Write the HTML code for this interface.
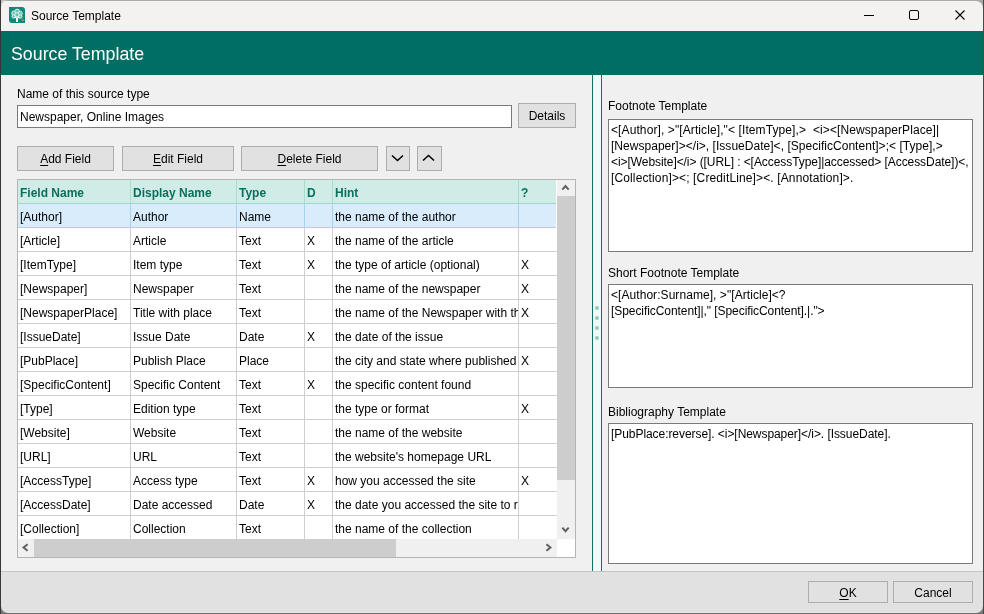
<!DOCTYPE html>
<html><head><meta charset="utf-8">
<style>
*{margin:0;padding:0;box-sizing:border-box}
html,body{width:984px;height:614px;overflow:hidden;background:#f0f0f0}
body{font-family:"Liberation Sans",sans-serif;font-size:12px;color:#000;position:relative}
.a{position:absolute}
.t{position:absolute;white-space:pre;line-height:16px;height:16px}
.btn{position:absolute;background:#e1e1e1;border:1px solid #adadad}
.btn span{position:absolute;left:0;right:0;text-align:center;line-height:16px;white-space:pre}
u{text-decoration:underline;text-decoration-thickness:1px;text-underline-offset:2px}
.ta{position:absolute;background:#fff;border:1px solid #7a7a7a}
.hd{color:#08705c;font-weight:bold}
.t,.btn span{will-change:transform}</style></head><body>
<!-- window frame -->
<div class="a" style="left:0;top:0;width:984px;height:614px;background:#f0f0f0"></div>
<!-- title bar -->
<div class="a" style="left:1px;top:1px;width:982px;height:30px;background:#f3f2f0"></div>
<div class="a" style="left:0;top:0;width:984px;height:1px;background:#aaa"></div>
<svg class="a" style="left:9px;top:7px" width="16" height="16" viewBox="0 0 16 16"><path d="M0 0H13A3 3 0 0 1 16 3V16H3A3 3 0 0 1 0 13Z" fill="#10887a"/><g fill="#6cc2b2" stroke="#e6f6f2" stroke-width="0.9"><circle cx="5" cy="6.2" r="2.3"/><circle cx="8.2" cy="4.4" r="2.3"/><circle cx="11.2" cy="6.4" r="2.1"/><circle cx="4.6" cy="9.4" r="1.7"/><circle cx="11.4" cy="9.6" r="1.7"/><circle cx="8" cy="7.8" r="2.1"/></g><path d="M6 10L8 11.5L10 10" stroke="#fff" stroke-width="1.2" fill="none"/><rect x="7.1" y="10.8" width="1.8" height="4.2" fill="#fff"/><rect x="13" y="12.5" width="1.6" height="1.6" fill="#c9a23a"/></svg>
<div class="t" style="left:31px;top:8px">Source Template</div>
<div class="a" style="left:864px;top:15px;width:10px;height:1px;background:#000"></div>
<div class="a" style="left:909px;top:10px;width:10px;height:10px;border:1px solid #000;border-radius:2px"></div>
<svg class="a" style="left:955px;top:10px" width="10" height="10" viewBox="0 0 10 10"><path d="M0.5 0.5L9.5 9.5M9.5 0.5L0.5 9.5" stroke="#000" stroke-width="1.1"/></svg>

<!-- teal header -->
<div class="a" style="left:1px;top:31px;width:982px;height:44px;background:#006e62"></div>
<div class="t" style="left:11px;top:42px;font-size:17.8px;line-height:24px;height:24px;color:#fff">Source Template</div>

<!-- left panel -->
<div class="t" style="left:17px;top:86px">Name of this source type</div>
<div class="ta" style="left:17px;top:105px;width:495px;height:23px"></div>
<div class="t" style="left:20px;top:109px">Newspaper, Online Images</div>
<div class="btn" style="left:518px;top:103px;width:58px;height:25px"><span style="top:4px">Details</span></div>

<div class="btn" style="left:17px;top:146px;width:97px;height:25px"><span style="top:4px"><u>A</u>dd Field</span></div>
<div class="btn" style="left:122px;top:146px;width:112px;height:25px"><span style="top:4px"><u>E</u>dit Field</span></div>
<div class="btn" style="left:241px;top:146px;width:137px;height:25px"><span style="top:4px"><u>D</u>elete Field</span></div>
<div class="btn" style="left:386px;top:146px;width:24px;height:25px"></div>
<svg class="a" style="left:391px;top:154px" width="13" height="8" viewBox="0 0 13 8"><path d="M1 1.5L6.5 6.5L12 1.5" stroke="#000" stroke-width="1.6" fill="none"/></svg>
<div class="btn" style="left:417px;top:146px;width:25px;height:25px"></div>
<svg class="a" style="left:422px;top:154px" width="13" height="8" viewBox="0 0 13 8"><path d="M1 6.5L6.5 1.5L12 6.5" stroke="#000" stroke-width="1.6" fill="none"/></svg>

<!-- grid -->
<div id="grid" class="a" style="left:17px;top:179px;width:559px;height:379px;border:1px solid #b4b4b4;background:#fff;overflow:hidden"></div>
<div id="rows"><div class="a" style="left:18px;top:180px;width:538px;height:23px;background:#d0ece6"></div>
<div class="a" style="left:18px;top:203px;width:538px;height:1px;background:#9fd9c6"></div>
<div class="a" style="left:130px;top:180px;width:1px;height:23px;background:#a9dccb"></div>
<div class="a" style="left:236px;top:180px;width:1px;height:23px;background:#a9dccb"></div>
<div class="a" style="left:304px;top:180px;width:1px;height:23px;background:#a9dccb"></div>
<div class="a" style="left:332px;top:180px;width:1px;height:23px;background:#a9dccb"></div>
<div class="a" style="left:518px;top:180px;width:1px;height:23px;background:#a9dccb"></div>
<div class="t hd" style="left:20px;top:185px">Field Name</div>
<div class="t hd" style="left:133px;top:185px">Display Name</div>
<div class="t hd" style="left:239px;top:185px">Type</div>
<div class="t hd" style="left:307px;top:185px">D</div>
<div class="t hd" style="left:335px;top:185px">Hint</div>
<div class="t hd" style="left:521px;top:185px">?</div>
<div class="a" style="left:18px;top:204px;width:538px;height:23px;background:#d8ecfc"></div>
<div class="a" style="left:18px;top:227px;width:538px;height:1px;background:#a7d3f3"></div>
<div class="a" style="left:130px;top:204px;width:1px;height:23px;background:#a7d3f3"></div>
<div class="a" style="left:236px;top:204px;width:1px;height:23px;background:#a7d3f3"></div>
<div class="a" style="left:304px;top:204px;width:1px;height:23px;background:#a7d3f3"></div>
<div class="a" style="left:332px;top:204px;width:1px;height:23px;background:#a7d3f3"></div>
<div class="a" style="left:518px;top:204px;width:1px;height:23px;background:#a7d3f3"></div>
<div class="t" style="left:20px;top:209px;width:110px;overflow:hidden">[Author]</div>
<div class="t" style="left:133px;top:209px;width:103px;overflow:hidden">Author</div>
<div class="t" style="left:239px;top:209px;width:65px;overflow:hidden">Name</div>
<div class="t" style="left:335px;top:209px;width:183px;overflow:hidden">the name of the author</div>
<div class="a" style="left:18px;top:251px;width:539px;height:1px;background:#cfcfcf"></div>
<div class="a" style="left:130px;top:228px;width:1px;height:24px;background:#cfcfcf"></div>
<div class="a" style="left:236px;top:228px;width:1px;height:24px;background:#cfcfcf"></div>
<div class="a" style="left:304px;top:228px;width:1px;height:24px;background:#cfcfcf"></div>
<div class="a" style="left:332px;top:228px;width:1px;height:24px;background:#cfcfcf"></div>
<div class="a" style="left:518px;top:228px;width:1px;height:24px;background:#cfcfcf"></div>
<div class="t" style="left:20px;top:233px;width:110px;overflow:hidden">[Article]</div>
<div class="t" style="left:133px;top:233px;width:103px;overflow:hidden">Article</div>
<div class="t" style="left:239px;top:233px;width:65px;overflow:hidden">Text</div>
<div class="t" style="left:307px;top:233px;width:25px;overflow:hidden">X</div>
<div class="t" style="left:335px;top:233px;width:183px;overflow:hidden">the name of the article</div>
<div class="a" style="left:18px;top:275px;width:539px;height:1px;background:#cfcfcf"></div>
<div class="a" style="left:130px;top:252px;width:1px;height:24px;background:#cfcfcf"></div>
<div class="a" style="left:236px;top:252px;width:1px;height:24px;background:#cfcfcf"></div>
<div class="a" style="left:304px;top:252px;width:1px;height:24px;background:#cfcfcf"></div>
<div class="a" style="left:332px;top:252px;width:1px;height:24px;background:#cfcfcf"></div>
<div class="a" style="left:518px;top:252px;width:1px;height:24px;background:#cfcfcf"></div>
<div class="t" style="left:20px;top:257px;width:110px;overflow:hidden">[ItemType]</div>
<div class="t" style="left:133px;top:257px;width:103px;overflow:hidden">Item type</div>
<div class="t" style="left:239px;top:257px;width:65px;overflow:hidden">Text</div>
<div class="t" style="left:307px;top:257px;width:25px;overflow:hidden">X</div>
<div class="t" style="left:335px;top:257px;width:183px;overflow:hidden">the type of article (optional)</div>
<div class="t" style="left:521px;top:257px;width:35px;overflow:hidden">X</div>
<div class="a" style="left:18px;top:299px;width:539px;height:1px;background:#cfcfcf"></div>
<div class="a" style="left:130px;top:276px;width:1px;height:24px;background:#cfcfcf"></div>
<div class="a" style="left:236px;top:276px;width:1px;height:24px;background:#cfcfcf"></div>
<div class="a" style="left:304px;top:276px;width:1px;height:24px;background:#cfcfcf"></div>
<div class="a" style="left:332px;top:276px;width:1px;height:24px;background:#cfcfcf"></div>
<div class="a" style="left:518px;top:276px;width:1px;height:24px;background:#cfcfcf"></div>
<div class="t" style="left:20px;top:281px;width:110px;overflow:hidden">[Newspaper]</div>
<div class="t" style="left:133px;top:281px;width:103px;overflow:hidden">Newspaper</div>
<div class="t" style="left:239px;top:281px;width:65px;overflow:hidden">Text</div>
<div class="t" style="left:335px;top:281px;width:183px;overflow:hidden">the name of the newspaper</div>
<div class="t" style="left:521px;top:281px;width:35px;overflow:hidden">X</div>
<div class="a" style="left:18px;top:323px;width:539px;height:1px;background:#cfcfcf"></div>
<div class="a" style="left:130px;top:300px;width:1px;height:24px;background:#cfcfcf"></div>
<div class="a" style="left:236px;top:300px;width:1px;height:24px;background:#cfcfcf"></div>
<div class="a" style="left:304px;top:300px;width:1px;height:24px;background:#cfcfcf"></div>
<div class="a" style="left:332px;top:300px;width:1px;height:24px;background:#cfcfcf"></div>
<div class="a" style="left:518px;top:300px;width:1px;height:24px;background:#cfcfcf"></div>
<div class="t" style="left:20px;top:305px;width:110px;overflow:hidden">[NewspaperPlace]</div>
<div class="t" style="left:133px;top:305px;width:103px;overflow:hidden">Title with place</div>
<div class="t" style="left:239px;top:305px;width:65px;overflow:hidden">Text</div>
<div class="t" style="left:335px;top:305px;width:183px;overflow:hidden">the name of the Newspaper with the place</div>
<div class="t" style="left:521px;top:305px;width:35px;overflow:hidden">X</div>
<div class="a" style="left:18px;top:347px;width:539px;height:1px;background:#cfcfcf"></div>
<div class="a" style="left:130px;top:324px;width:1px;height:24px;background:#cfcfcf"></div>
<div class="a" style="left:236px;top:324px;width:1px;height:24px;background:#cfcfcf"></div>
<div class="a" style="left:304px;top:324px;width:1px;height:24px;background:#cfcfcf"></div>
<div class="a" style="left:332px;top:324px;width:1px;height:24px;background:#cfcfcf"></div>
<div class="a" style="left:518px;top:324px;width:1px;height:24px;background:#cfcfcf"></div>
<div class="t" style="left:20px;top:329px;width:110px;overflow:hidden">[IssueDate]</div>
<div class="t" style="left:133px;top:329px;width:103px;overflow:hidden">Issue Date</div>
<div class="t" style="left:239px;top:329px;width:65px;overflow:hidden">Date</div>
<div class="t" style="left:307px;top:329px;width:25px;overflow:hidden">X</div>
<div class="t" style="left:335px;top:329px;width:183px;overflow:hidden">the date of the issue</div>
<div class="a" style="left:18px;top:371px;width:539px;height:1px;background:#cfcfcf"></div>
<div class="a" style="left:130px;top:348px;width:1px;height:24px;background:#cfcfcf"></div>
<div class="a" style="left:236px;top:348px;width:1px;height:24px;background:#cfcfcf"></div>
<div class="a" style="left:304px;top:348px;width:1px;height:24px;background:#cfcfcf"></div>
<div class="a" style="left:332px;top:348px;width:1px;height:24px;background:#cfcfcf"></div>
<div class="a" style="left:518px;top:348px;width:1px;height:24px;background:#cfcfcf"></div>
<div class="t" style="left:20px;top:353px;width:110px;overflow:hidden">[PubPlace]</div>
<div class="t" style="left:133px;top:353px;width:103px;overflow:hidden">Publish Place</div>
<div class="t" style="left:239px;top:353px;width:65px;overflow:hidden">Place</div>
<div class="t" style="left:335px;top:353px;width:183px;overflow:hidden">the city and state where published</div>
<div class="t" style="left:521px;top:353px;width:35px;overflow:hidden">X</div>
<div class="a" style="left:18px;top:395px;width:539px;height:1px;background:#cfcfcf"></div>
<div class="a" style="left:130px;top:372px;width:1px;height:24px;background:#cfcfcf"></div>
<div class="a" style="left:236px;top:372px;width:1px;height:24px;background:#cfcfcf"></div>
<div class="a" style="left:304px;top:372px;width:1px;height:24px;background:#cfcfcf"></div>
<div class="a" style="left:332px;top:372px;width:1px;height:24px;background:#cfcfcf"></div>
<div class="a" style="left:518px;top:372px;width:1px;height:24px;background:#cfcfcf"></div>
<div class="t" style="left:20px;top:377px;width:110px;overflow:hidden">[SpecificContent]</div>
<div class="t" style="left:133px;top:377px;width:103px;overflow:hidden">Specific Content</div>
<div class="t" style="left:239px;top:377px;width:65px;overflow:hidden">Text</div>
<div class="t" style="left:307px;top:377px;width:25px;overflow:hidden">X</div>
<div class="t" style="left:335px;top:377px;width:183px;overflow:hidden">the specific content found</div>
<div class="a" style="left:18px;top:419px;width:539px;height:1px;background:#cfcfcf"></div>
<div class="a" style="left:130px;top:396px;width:1px;height:24px;background:#cfcfcf"></div>
<div class="a" style="left:236px;top:396px;width:1px;height:24px;background:#cfcfcf"></div>
<div class="a" style="left:304px;top:396px;width:1px;height:24px;background:#cfcfcf"></div>
<div class="a" style="left:332px;top:396px;width:1px;height:24px;background:#cfcfcf"></div>
<div class="a" style="left:518px;top:396px;width:1px;height:24px;background:#cfcfcf"></div>
<div class="t" style="left:20px;top:401px;width:110px;overflow:hidden">[Type]</div>
<div class="t" style="left:133px;top:401px;width:103px;overflow:hidden">Edition type</div>
<div class="t" style="left:239px;top:401px;width:65px;overflow:hidden">Text</div>
<div class="t" style="left:335px;top:401px;width:183px;overflow:hidden">the type or format</div>
<div class="t" style="left:521px;top:401px;width:35px;overflow:hidden">X</div>
<div class="a" style="left:18px;top:443px;width:539px;height:1px;background:#cfcfcf"></div>
<div class="a" style="left:130px;top:420px;width:1px;height:24px;background:#cfcfcf"></div>
<div class="a" style="left:236px;top:420px;width:1px;height:24px;background:#cfcfcf"></div>
<div class="a" style="left:304px;top:420px;width:1px;height:24px;background:#cfcfcf"></div>
<div class="a" style="left:332px;top:420px;width:1px;height:24px;background:#cfcfcf"></div>
<div class="a" style="left:518px;top:420px;width:1px;height:24px;background:#cfcfcf"></div>
<div class="t" style="left:20px;top:425px;width:110px;overflow:hidden">[Website]</div>
<div class="t" style="left:133px;top:425px;width:103px;overflow:hidden">Website</div>
<div class="t" style="left:239px;top:425px;width:65px;overflow:hidden">Text</div>
<div class="t" style="left:335px;top:425px;width:183px;overflow:hidden">the name of the website</div>
<div class="a" style="left:18px;top:467px;width:539px;height:1px;background:#cfcfcf"></div>
<div class="a" style="left:130px;top:444px;width:1px;height:24px;background:#cfcfcf"></div>
<div class="a" style="left:236px;top:444px;width:1px;height:24px;background:#cfcfcf"></div>
<div class="a" style="left:304px;top:444px;width:1px;height:24px;background:#cfcfcf"></div>
<div class="a" style="left:332px;top:444px;width:1px;height:24px;background:#cfcfcf"></div>
<div class="a" style="left:518px;top:444px;width:1px;height:24px;background:#cfcfcf"></div>
<div class="t" style="left:20px;top:449px;width:110px;overflow:hidden">[URL]</div>
<div class="t" style="left:133px;top:449px;width:103px;overflow:hidden">URL</div>
<div class="t" style="left:239px;top:449px;width:65px;overflow:hidden">Text</div>
<div class="t" style="left:335px;top:449px;width:183px;overflow:hidden">the website's homepage URL</div>
<div class="a" style="left:18px;top:491px;width:539px;height:1px;background:#cfcfcf"></div>
<div class="a" style="left:130px;top:468px;width:1px;height:24px;background:#cfcfcf"></div>
<div class="a" style="left:236px;top:468px;width:1px;height:24px;background:#cfcfcf"></div>
<div class="a" style="left:304px;top:468px;width:1px;height:24px;background:#cfcfcf"></div>
<div class="a" style="left:332px;top:468px;width:1px;height:24px;background:#cfcfcf"></div>
<div class="a" style="left:518px;top:468px;width:1px;height:24px;background:#cfcfcf"></div>
<div class="t" style="left:20px;top:473px;width:110px;overflow:hidden">[AccessType]</div>
<div class="t" style="left:133px;top:473px;width:103px;overflow:hidden">Access type</div>
<div class="t" style="left:239px;top:473px;width:65px;overflow:hidden">Text</div>
<div class="t" style="left:307px;top:473px;width:25px;overflow:hidden">X</div>
<div class="t" style="left:335px;top:473px;width:183px;overflow:hidden">how you accessed the site</div>
<div class="t" style="left:521px;top:473px;width:35px;overflow:hidden">X</div>
<div class="a" style="left:18px;top:515px;width:539px;height:1px;background:#cfcfcf"></div>
<div class="a" style="left:130px;top:492px;width:1px;height:24px;background:#cfcfcf"></div>
<div class="a" style="left:236px;top:492px;width:1px;height:24px;background:#cfcfcf"></div>
<div class="a" style="left:304px;top:492px;width:1px;height:24px;background:#cfcfcf"></div>
<div class="a" style="left:332px;top:492px;width:1px;height:24px;background:#cfcfcf"></div>
<div class="a" style="left:518px;top:492px;width:1px;height:24px;background:#cfcfcf"></div>
<div class="t" style="left:20px;top:497px;width:110px;overflow:hidden">[AccessDate]</div>
<div class="t" style="left:133px;top:497px;width:103px;overflow:hidden">Date accessed</div>
<div class="t" style="left:239px;top:497px;width:65px;overflow:hidden">Date</div>
<div class="t" style="left:307px;top:497px;width:25px;overflow:hidden">X</div>
<div class="t" style="left:335px;top:497px;width:183px;overflow:hidden">the date you accessed the site to record</div>
<div class="a" style="left:130px;top:516px;width:1px;height:23px;background:#cfcfcf"></div>
<div class="a" style="left:236px;top:516px;width:1px;height:23px;background:#cfcfcf"></div>
<div class="a" style="left:304px;top:516px;width:1px;height:23px;background:#cfcfcf"></div>
<div class="a" style="left:332px;top:516px;width:1px;height:23px;background:#cfcfcf"></div>
<div class="a" style="left:518px;top:516px;width:1px;height:23px;background:#cfcfcf"></div>
<div class="t" style="left:20px;top:521px;width:110px;overflow:hidden">[Collection]</div>
<div class="t" style="left:133px;top:521px;width:103px;overflow:hidden">Collection</div>
<div class="t" style="left:239px;top:521px;width:65px;overflow:hidden">Text</div>
<div class="t" style="left:335px;top:521px;width:183px;overflow:hidden">the name of the collection</div>
<div class="a" style="left:557px;top:180px;width:18px;height:359px;background:#f0f0f0"></div>
<div class="a" style="left:557px;top:196px;width:18px;height:284px;background:#cdcdcd"></div>
<div class="a" style="left:18px;top:539px;width:539px;height:18px;background:#f0f0f0"></div>
<div class="a" style="left:34px;top:539px;width:362px;height:18px;background:#cdcdcd"></div>
<svg class="a" style="left:0;top:0" width="984" height="614"><g stroke="#606060" stroke-width="2" fill="none" stroke-linejoin="miter"><path d="M562.3 189.6L565.5 186L568.7 189.6"/><path d="M562.3 527.6L565.5 531.2L568.7 527.6"/><path d="M27.6 544.3L23.6 547.5L27.6 550.7"/><path d="M546.4 544.3L550.4 547.5L546.4 550.7"/></g></svg>
<div class="a" style="left:557px;top:539px;width:18px;height:18px;background:#fff"></div></div><!--/rows-->

<!-- splitter -->
<div class="a" style="left:592px;top:75px;width:10px;height:496px;background:#f0f9f7;border-left:1px solid #0f7264;border-right:1px solid #0f7264"></div><div class="a" style="left:595px;top:306px;width:4px;height:4px;border-radius:2px;background:#8fcabd"></div><div class="a" style="left:595px;top:316px;width:4px;height:4px;border-radius:2px;background:#8fcabd"></div><div class="a" style="left:595px;top:326px;width:4px;height:4px;border-radius:2px;background:#8fcabd"></div><div class="a" style="left:595px;top:336px;width:4px;height:4px;border-radius:2px;background:#8fcabd"></div>

<!-- right panel -->
<div class="t" style="left:608px;top:98px">Footnote Template</div>
<div class="ta" style="left:608px;top:119px;width:365px;height:133px"></div>
<div class="t" style="left:611px;top:122px;letter-spacing:0.1px">&lt;[Author], &gt;"[Article],"&lt; [ItemType],&gt;  &lt;i&gt;&lt;[NewspaperPlace]|</div>
<div class="t" style="left:611px;top:138px;letter-spacing:0.03px">[Newspaper]&gt;&lt;/i&gt;, [IssueDate]&lt;, [SpecificContent]&gt;;&lt; [Type],&gt;</div>
<div class="t" style="left:611px;top:154px;letter-spacing:-0.07px">&lt;i&gt;[Website]&lt;/i&gt; ([URL] : &lt;[AccessType]|accessed&gt; [AccessDate])&lt;,</div>
<div class="t" style="left:611px;top:170px;letter-spacing:0.13px">[Collection]&gt;&lt;; [CreditLine]&gt;&lt;. [Annotation]&gt;.</div>

<div class="t" style="left:608px;top:265px">Short Footnote Template</div>
<div class="ta" style="left:608px;top:284px;width:365px;height:104px"></div>
<div class="t" style="left:611px;top:287px;letter-spacing:0.06px">&lt;[Author:Surname], &gt;"[Article]&lt;?</div>
<div class="t" style="left:611px;top:303px;letter-spacing:-0.07px">[SpecificContent]|," [SpecificContent].|."&gt;</div>

<div class="t" style="left:608px;top:404px">Bibliography Template</div>
<div class="ta" style="left:608px;top:423px;width:365px;height:141px"></div>
<div class="t" style="left:611px;top:426px;letter-spacing:-0.06px">[PubPlace:reverse]. &lt;i&gt;[Newspaper]&lt;/i&gt;. [IssueDate].</div>

<!-- footer -->
<div class="a" style="left:1px;top:571px;width:982px;height:42px;background:#e1e1e1;border-top:1px solid #c4c4c4"></div>
<div class="btn" style="left:808px;top:581px;width:80px;height:22px"><span style="top:3px"><u>O</u>K</span></div>
<div class="btn" style="left:893px;top:581px;width:80px;height:22px"><span style="top:3px">Cancel</span></div>

<!-- corners -->
<svg class="a" style="left:0;top:0" width="8" height="8"><path d="M0 0H8A7 7 0 0 0 1 7V8H0Z" fill="#c4c4c4"/></svg>
<svg class="a" style="left:976px;top:0" width="8" height="8"><path d="M0 0H8V8H7A7 7 0 0 0 0 1Z" fill="#a8a8a8"/></svg>
<svg class="a" style="left:0;top:606px" width="8" height="8"><path d="M0 0H1A7 7 0 0 0 8 7V8H0Z" fill="#7a7a7a"/></svg>
<svg class="a" style="left:976px;top:606px" width="8" height="8"><path d="M8 0H7A7 7 0 0 1 0 7V8H8Z" fill="#7a7a7a"/></svg>

<!-- borders -->
<div class="a" style="left:8px;top:612px;width:968px;height:1px;background:#e6e6e6"></div>
<div class="a" style="left:0;top:613px;width:984px;height:1px;background:#6e6e6e"></div>
<div class="a" style="left:0;top:0;width:1px;height:614px;background:#383838"></div>
<div class="a" style="left:983px;top:0;width:1px;height:614px;background:#484848"></div>
</body></html>
